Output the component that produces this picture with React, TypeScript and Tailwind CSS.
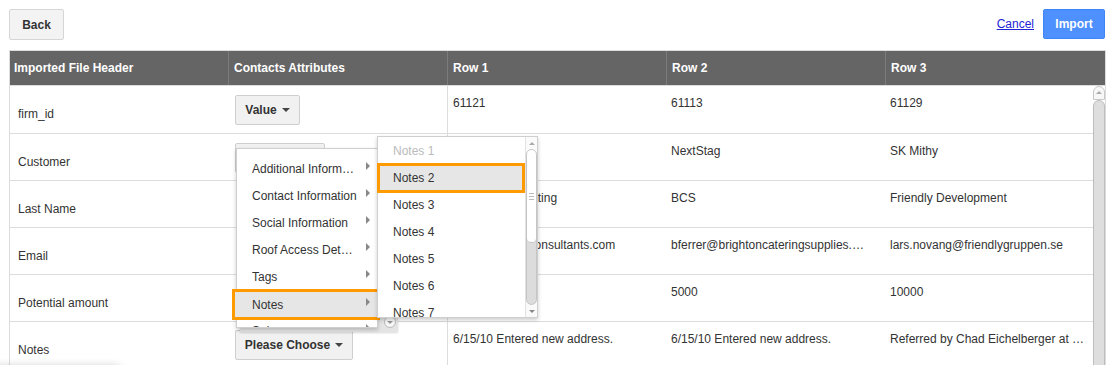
import React from "react";

type Row = { label: string; attr: string; attrWidth: string; hidden?: boolean; values: string[] };

const rows: Row[] = [
  { label: "firm_id", attr: "Value", attrWidth: "w-[65px]", values: ["61121", "61113", "61129"] },
  { label: "Customer", attr: "Company", attrWidth: "w-[90px]", values: ["JCS", "NextStag", "SK Mithy"] },
  { label: "Last Name", attr: "Last Name", attrWidth: "w-[90px]", hidden: true, values: ["Jackson Consulting", "BCS", "Friendly Development"] },
  {
    label: "Email",
    attr: "Email",
    attrWidth: "w-[70px]",
    hidden: true,
    values: ["sam@jacksonconsultants.com", "bferrer@brightoncateringsupplies.com", "lars.novang@friendlygruppen.se"],
  },
  { label: "Potential amount", attr: "Amount", attrWidth: "w-[80px]", hidden: true, values: ["2500", "5000", "10000"] },
  {
    label: "Notes",
    attr: "Please Choose",
    attrWidth: "w-[118px]",
    values: ["6/15/10 Entered new address.", "6/15/10 Entered new address.", "Referred by Chad Eichelberger at the fair"],
  },
];

const menuItems = [
  "Additional Information",
  "Contact Information",
  "Social Information",
  "Roof Access Details",
  "Tags",
  "Notes",
  "Salesperson",
];

const subItems = ["Notes 1", "Notes 2", "Notes 3", "Notes 4", "Notes 5", "Notes 6", "Notes 7", "Notes 8"];

// right padding per data column, so the ellipsis lands where the original cuts
const cellPad = ["pr-[16px]", "pr-[16px]", "pr-[6px]"];

function Caret() {
  return <span className="inline-block h-0 w-0 border-x-[4px] border-t-[4px] border-x-transparent border-t-[#444]" />;
}

function SideArrow() {
  return (
    <span className="-translate-y-[3px] inline-block h-0 w-0 border-y-[4px] border-l-[4px] border-y-transparent border-l-[#888]" />
  );
}

function AttrButton({ text, width, hidden }: { text: string; width: string; hidden?: boolean }) {
  return (
    <button
      className={`flex h-[30px] ${width} items-center justify-center gap-[5px] rounded-[2px] border border-[#cfcfcf] bg-[#f1f1f1] font-bold text-[#333] ${hidden ? "invisible" : ""}`}
    >
      {text}
      <Caret />
    </button>
  );
}

export default function App() {
  return (
    <div className="relative h-[365px] w-[1109px] overflow-hidden bg-white font-['Liberation_Sans',Arial,sans-serif] text-[12px] text-[#333]">
      {/* top bar */}
      <div className="flex items-start justify-between pl-[9px] pr-[4px] pt-[9px]">
        <button className="h-[31px] w-[55px] rounded-[2px] border border-[#d6d6d6] bg-[#f3f3f3] font-bold text-[#333]">
          Back
        </button>
        <div className="flex items-center gap-[9px]">
          <a href="#" className="text-[#2323d6] underline">
            Cancel
          </a>
          <button className="h-[30px] w-[62px] rounded-[2px] border border-[#3f86f5] bg-[#4d90fe] font-bold text-white">
            Import
          </button>
        </div>
      </div>

      {/* table */}
      <div className="mx-[9px] mt-[10px] w-[1097px] border border-[#dcdcdc]">
        <div className="grid h-[35px] grid-cols-[218px_219px_219px_219px_1fr] border-b border-[#dcdcdc] bg-[#656565] font-bold text-white">
          <div className="flex items-center pl-[4px]">Imported File Header</div>
          <div className="flex items-center border-l border-[#7c7c7c] pl-[5px]">Contacts Attributes</div>
          <div className="flex items-center border-l border-[#7c7c7c] pl-[5px]">Row 1</div>
          <div className="flex items-center border-l border-[#7c7c7c] pl-[5px]">Row 2</div>
          <div className="flex items-center border-l border-[#7c7c7c] pl-[5px]">Row 3</div>
        </div>

        <div className="flex">
          <div className="flex-1">
            {rows.map((r, i) => (
              <div
                key={r.label}
                className={`grid ${i === 0 ? "h-[48px]" : "h-[47px]"} grid-cols-[218px_219px_219px_219px_1fr] border-b border-[#dcdcdc]`}
              >
                <div className="pl-[8px] pt-[20px] leading-[16px]">{r.label}</div>
                <div className={`pl-[7px] ${i === 5 ? "pt-[8px]" : "pt-[9px]"}`}>
                  <AttrButton text={r.attr} width={r.attrWidth} hidden={r.hidden} />
                </div>
                {r.values.map((v, j) => (
                  <div
                    key={j}
                    className={`truncate pl-[5px] ${cellPad[j]} pt-[9px] leading-[16px] ${j === 0 ? "border-l border-[#dcdcdc]" : ""}`}
                  >
                    {v}
                  </div>
                ))}
              </div>
            ))}
          </div>
          {/* scrollbar */}
          <div className="flex w-[12px] flex-col">
            <div className="flex h-[14px] items-start justify-center rounded-t-full border border-[#c8c8c8] bg-[#f7f7f7] pt-[4px]">
              <span className="inline-block h-0 w-0 border-x-[3px] border-b-[3px] border-x-transparent border-b-[#aaa]" />
            </div>
            <div className="h-[300px] rounded-t-full border border-[#bdbdbd] bg-[#dedede]" />
          </div>
        </div>
      </div>

      {/* open menus */}
      <div className="absolute left-[240px] top-[317px] h-[15px] w-[158px] bg-[#e4e4e4] shadow-[0_1px_2px_rgba(0,0,0,0.15)]">
        <div className="absolute left-[144px] top-[-1px] flex h-[12px] w-[12px] items-center justify-center rounded-full border border-[#bbb] bg-[#f7f7f7]">
          <span className="inline-block h-0 w-0 border-x-[3px] border-t-[3px] border-x-transparent border-t-[#999]" />
        </div>
      </div>

      <div className="absolute left-[236px] top-[148px] h-[180px] w-[142px] overflow-hidden border border-[#cfcfcf] bg-white pt-[6px] shadow-[0_2px_4px_rgba(0,0,0,0.2)]">
        {menuItems.map((m) =>
          m === "Notes" ? (
            <div key={m} className="h-[27px]" />
          ) : (
            <div key={m} className="flex h-[27px] items-center justify-between pl-[15px] pr-[7px]">
              <span className="w-[106px] truncate">{m}</span>
              <SideArrow />
            </div>
          )
        )}
      </div>
      <div className="absolute left-[232px] top-[289px] flex h-[31px] w-[148px] items-center justify-between border-[3px] border-[#ff9a00] bg-[#e6e6e6] pl-[17px] pr-[7px]">
        <span>Notes</span>
        <SideArrow />
      </div>

      <div className="absolute left-[377px] top-[136px] flex h-[182px] w-[161px] overflow-hidden border border-[#cfcfcf] bg-white shadow-[0_2px_4px_rgba(0,0,0,0.2)]">
        <div className="flex-1">
          {subItems.map((s, i) =>
            i === 1 ? (
              <div key={s} className="h-[27px]" />
            ) : (
              <div key={s} className={`flex h-[27px] items-center pl-[15px] ${i === 0 ? "text-[#bbb]" : ""}`}>
                {s}
              </div>
            )
          )}
        </div>
        <div className="flex w-[12px] flex-col border-l border-[#e2e2e2] bg-[#fafafa]">
          <div className="flex h-[12px] items-center justify-center">
            <span className="inline-block h-0 w-0 border-x-[3px] border-b-[3px] border-x-transparent border-b-[#aaa]" />
          </div>
          <div className="relative flex-1 rounded-full border border-[#c4c4c4] bg-[#dcdcdc]">
            <div className="flex h-[93px] flex-col items-center justify-center gap-[2px] rounded-full border-b border-[#c4c4c4] bg-white">
              <span className="h-px w-[5px] bg-[#bbb]" />
              <span className="h-px w-[5px] bg-[#bbb]" />
              <span className="h-px w-[5px] bg-[#bbb]" />
            </div>
          </div>
          <div className="flex h-[12px] items-center justify-center">
            <span className="inline-block h-0 w-0 border-x-[3px] border-t-[3px] border-x-transparent border-t-[#888]" />
          </div>
        </div>
      </div>
      <div className="absolute left-[377px] top-[163px] flex h-[30px] w-[148px] items-center border-[3px] border-[#ff9a00] bg-[#e6e6e6] pl-[13px]">
        Notes 2
      </div>

      {/* faint shadow of a panel below */}
      <div className="absolute left-[-10px] top-[366px] h-[20px] w-[130px] rounded-[4px] bg-white shadow-[0_0_8px_rgba(0,0,0,0.2)]" />
    </div>
  );
}
